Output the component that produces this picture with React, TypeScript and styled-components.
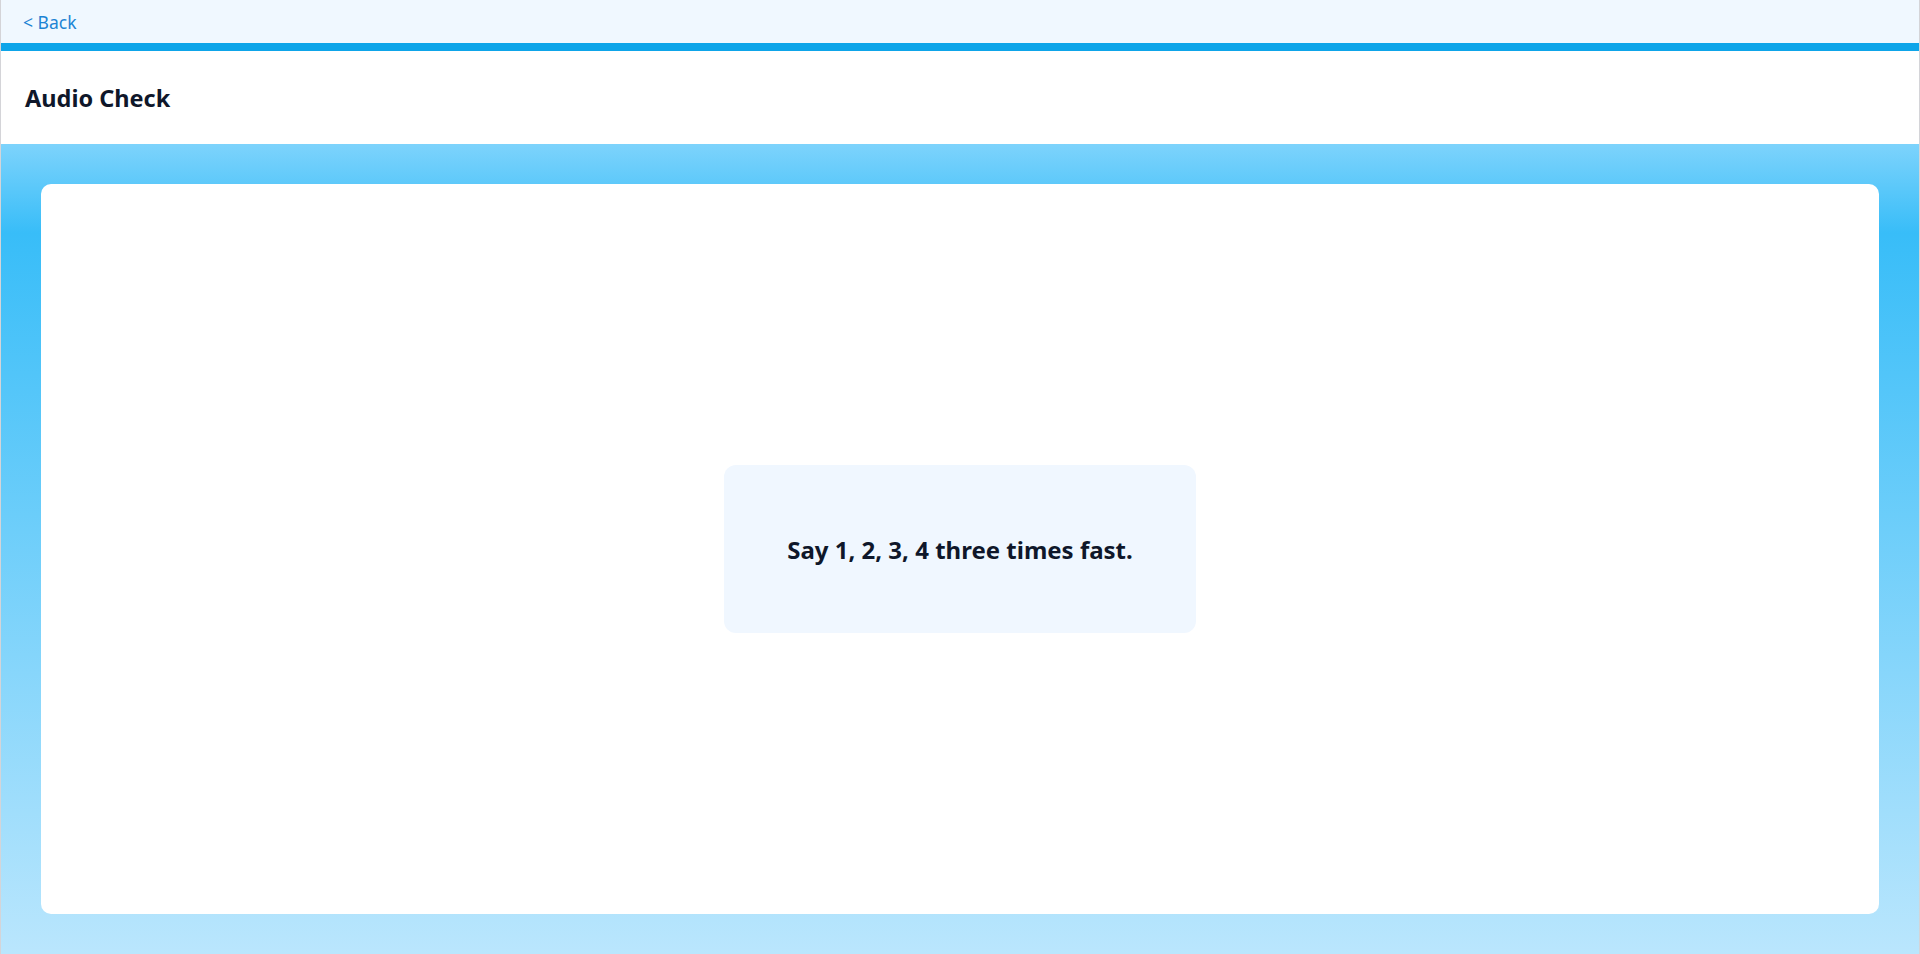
import React from 'react'
import styled, {createGlobalStyle} from 'styled-components'

const GlobalStyle = createGlobalStyle`
  html, body {
    margin: 0;
    padding: 0;
    height: 100%;
  }
  body {
    font-family: "Noto Sans", "Open Sans", sans-serif;
    color: #111827;
  }
  #root {
    height: 100%;
  }
`

const Page = styled.div`
  display: flex;
  flex-direction: column;
  height: 100vh;
  box-sizing: border-box;
  border-left: 1px solid #d4d4d8;
  border-right: 1px solid #d4d4d8;
`

const TopBar = styled.nav`
  display: flex;
  align-items: center;
  height: 43px;
  padding: 0 22px;
  background: #f0f8ff;
  border-bottom: 8px solid #0ea5e9;
`

const BackLink = styled.a`
  color: #1c84d4;
  font-size: 17.5px;
  text-decoration: none;
  cursor: pointer;
`

const Header = styled.header`
  display: flex;
  align-items: center;
  height: 93px;
  padding: 0 24px;
  background: #ffffff;
`

const Title = styled.h1`
  margin: 0;
  font-size: 23.5px;
  font-weight: 700;
  color: #0f172a;
`

const Stage = styled.main`
  flex: 1;
  display: flex;
  padding: 40px;
  background: linear-gradient(to bottom, #7dd3fc 0%, #38bdf8 11%, #bae6fd 100%);
`

const Card = styled.section`
  flex: 1;
  display: flex;
  align-items: center;
  justify-content: center;
  background: #ffffff;
  border-radius: 10px;
`

const Prompt = styled.div`
  display: flex;
  align-items: center;
  justify-content: center;
  width: 472px;
  height: 168px;
  border-radius: 12px;
  background: #f0f7ff;
`

const PromptText = styled.p`
  margin: 0;
  font-size: 24px;
  font-weight: 700;
  color: #0f172a;
`

export default function App() {
  return (
    <>
      <GlobalStyle />
      <Page>
        <TopBar>
          <BackLink>&lt; Back</BackLink>
        </TopBar>
        <Header>
          <Title>Audio Check</Title>
        </Header>
        <Stage>
          <Card>
            <Prompt>
              <PromptText>Say 1, 2, 3, 4 three times fast.</PromptText>
            </Prompt>
          </Card>
        </Stage>
      </Page>
    </>
  )
}
